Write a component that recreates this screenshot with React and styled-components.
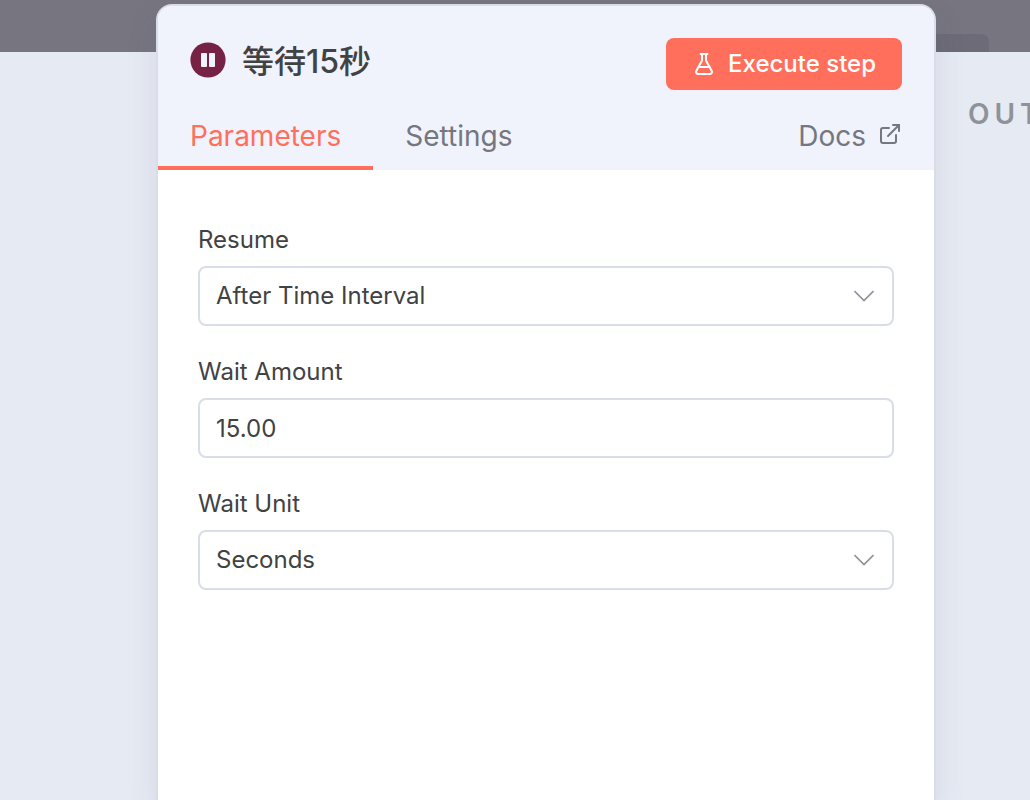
import React from 'react';
import styled, { createGlobalStyle } from 'styled-components';
import { ExternalLink, FlaskConical } from 'lucide-react';

const GlobalStyle = createGlobalStyle`
  * {
    box-sizing: border-box;
  }

  body {
    margin: 0;
    background: #777580;
    color: #414244;
    font-family: 'Inter', 'Noto Sans CJK SC', sans-serif;
    font-size: 24px;
    line-height: 32px;
  }

  button, input, select {
    font: inherit;
    color: inherit;
  }
`;

const StyledEditor = styled.main`
  display: grid;
  grid-template-columns: 156px minmax(0, 1fr) 94px;
  min-height: 100vh;
  overflow: hidden;
`;

const Side = styled.section`
  display: flex;
  flex-direction: column;
  min-width: 0;
`;

const Canvas = styled.div`
  display: flex;
  align-items: flex-end;
  height: 52px;
`;

const CanvasButton = styled.div`
  width: 53px;
  height: 18px;
  border-radius: 0 8px 0 0;
  background: #6c6b77;
`;

const DataPanel = styled.div`
  flex: 1;
  padding: 46px 32px;
  background: #e6eaf3;
  white-space: nowrap;

  h2 {
    margin: 0;
    color: #8f9299;
    font-size: 28px;
    font-weight: 600;
    letter-spacing: 5px;
  }
`;

const NodePanel = styled.section`
  display: flex;
  flex-direction: column;
  position: relative;
  margin-top: 4px;
  border: 2px solid #d9dde8;
  border-bottom: 0;
  border-radius: 16px 16px 0 0;
  background: #fff;
  box-shadow: 0 12px 32px rgba(68, 68, 90, 0.1);
`;

const Header = styled.header`
  border-radius: 14px 14px 0 0;
  background: #f0f3fb;
`;

const TitleRow = styled.div`
  display: flex;
  justify-content: space-between;
  align-items: center;
  padding: 32px 32px 12px;
`;

const Title = styled.div`
  display: flex;
  align-items: center;
  gap: 16px;
  height: 40px;
  margin-bottom: 8px;

  h1 {
    margin: 0;
    padding-top: 4px;
    font-size: 32px;
    font-weight: 500;
    line-height: 40px;
  }
`;

const ExecuteButton = styled.button`
  display: flex;
  align-items: center;
  gap: 12px;
  height: 52px;
  padding: 0 26px;
  border: 0;
  border-radius: 8px;
  background: #ff6f5c;
  color: #fff;
  font-weight: 500;
`;

const TabRow = styled.nav`
  display: flex;
  justify-content: space-between;
  padding-right: 32px;
  font-size: 28px;
`;

const Tabs = styled.div`
  display: flex;
`;

const Tab = styled.button`
  height: 68px;
  padding: 4px 32px 0;
  border: 0;
  border-bottom: 4px solid ${({ $active }) => ($active ? '#ff6f5c' : 'transparent')};
  background: none;
  color: ${({ $active }) => ($active ? '#ff6f5c' : '#74777f')};
`;

const DocsLink = styled.a`
  display: flex;
  align-items: center;
  gap: 12px;
  height: 68px;
  color: #74777f;
  text-decoration: none;

  svg {
    margin-bottom: 4px;
  }
`;

const Form = styled.form`
  display: flex;
  flex-direction: column;
  gap: 28px;
  padding: 52px 40px;
`;

const Field = styled.div`
  display: flex;
  flex-direction: column;
  gap: 8px;

  label {
    line-height: 36px;
  }
`;

const Control = styled.div`
  display: grid;
  align-items: center;

  > * {
    grid-area: 1 / 1;
  }

  svg {
    justify-self: end;
    margin-right: 20px;
    pointer-events: none;
  }
`;

const Input = styled.input`
  width: 100%;
  height: 60px;
  padding: 0 16px;
  border: 2px solid #d9dde8;
  border-radius: 8px;
  background: #fff;
  appearance: none;
  outline: none;
`;

const PauseIcon = () => (
  <svg width="36" height="36" viewBox="0 0 36 36" aria-hidden="true">
    <circle cx="18" cy="18" r="17.6" fill="#772244" />
    <rect x="11" y="11" width="6" height="14" rx="1" fill="#f0f3fb" />
    <rect x="19" y="11" width="6" height="14" rx="1" fill="#f0f3fb" />
  </svg>
);

const Chevron = () => (
  <svg width="20" height="12" viewBox="0 0 20 12" fill="none" stroke="#8f9299" strokeWidth="1.6" aria-hidden="true">
    <path d="M.5 1l9.500 9.500L19.500 1" />
  </svg>
);

const SelectField = ({ id, label, options }) => (
  <Field>
    <label htmlFor={id}>{label}</label>
    <Control>
      <Input as="select" id={id}>
        {options.map((option) => (
          <option key={option}>{option}</option>
        ))}
      </Input>
      <Chevron />
    </Control>
  </Field>
);

export default function App() {
  const [tab, setTab] = React.useState('Parameters');
  const [amount, setAmount] = React.useState('15.00');

  return (
    <StyledEditor>
      <GlobalStyle />

      <Side>
        <Canvas />
        <DataPanel />
      </Side>

      <NodePanel>
        <Header>
          <TitleRow>
            <Title>
              <PauseIcon />
              <h1>等待15秒</h1>
            </Title>
            <ExecuteButton type="button">
              <FlaskConical size={24} />
              Execute step
            </ExecuteButton>
          </TitleRow>
          <TabRow>
            <Tabs>
              {['Parameters', 'Settings'].map((name) => (
                <Tab key={name} type="button" $active={tab === name} onClick={() => setTab(name)}>
                  {name}
                </Tab>
              ))}
            </Tabs>
            <DocsLink href="#docs">
              Docs
              <ExternalLink size={24} />
            </DocsLink>
          </TabRow>
        </Header>

        <Form>
          <SelectField
            id="resume"
            label="Resume"
            options={['After Time Interval', 'At Specified Time', 'On Webhook Call']}
          />
          <Field>
            <label htmlFor="amount">Wait Amount</label>
            <Input id="amount" value={amount} onChange={(event) => setAmount(event.target.value)} />
          </Field>
          <SelectField id="unit" label="Wait Unit" options={['Seconds', 'Minutes', 'Hours', 'Days']} />
        </Form>
      </NodePanel>

      <Side>
        <Canvas>
          <CanvasButton />
        </Canvas>
        <DataPanel>
          <h2>OUTPUT</h2>
        </DataPanel>
      </Side>
    </StyledEditor>
  );
}
